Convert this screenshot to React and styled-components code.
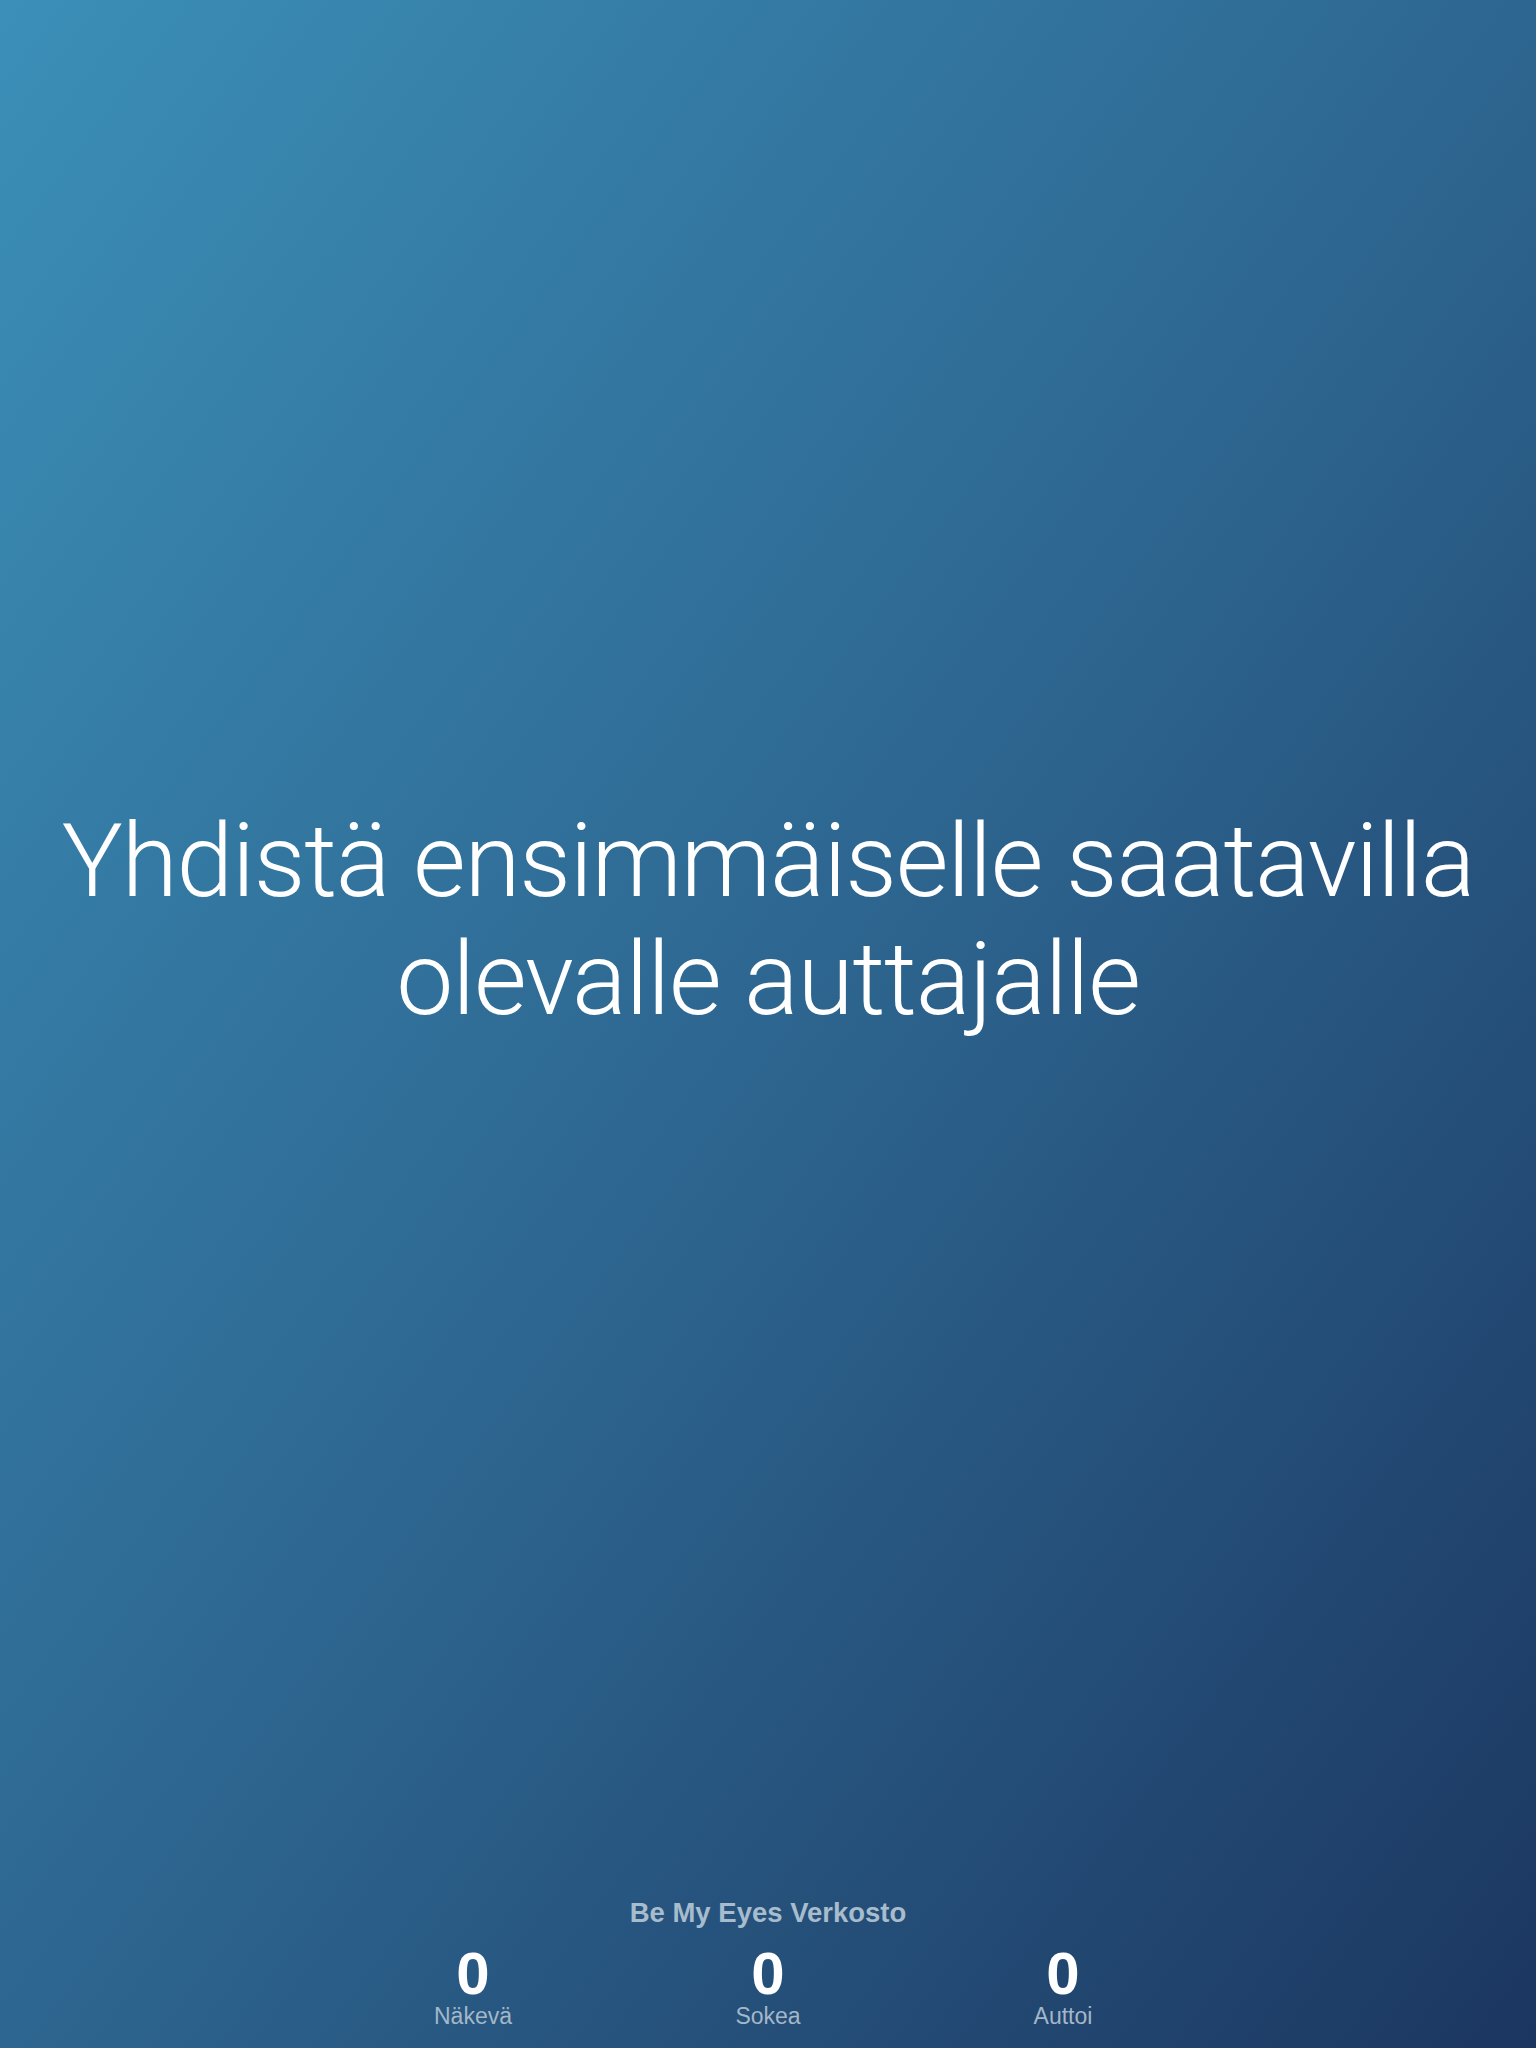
import styled, { createGlobalStyle } from "styled-components";

const GlobalStyle = createGlobalStyle`
    html, body {
        margin: 0;
        padding: 0;
    }
    body {
        font-family: "Roboto", "Liberation Sans", sans-serif;
    }
`;

export default function App() {
    const stats = [
        { value: 0, label: "Näkevä" },
        { value: 0, label: "Sokea" },
        { value: 0, label: "Auttoi" },
    ];

    return (
        <>
            <GlobalStyle />
            <Screen>
                <Main>
                    <Headline>
                        Yhdistä ensimmäiselle saatavilla
                        <br />
                        olevalle auttajalle
                    </Headline>
                </Main>
                <Footer>
                    <NetworkTitle>Be My Eyes Verkosto</NetworkTitle>
                    <Stats>
                        {stats.map((s) => (
                            <Stat key={s.label}>
                                <StatValue>{s.value}</StatValue>
                                <StatLabel>{s.label}</StatLabel>
                            </Stat>
                        ))}
                    </Stats>
                </Footer>
            </Screen>
        </>
    );
}

const Screen = styled.div`
    width: 1536px;
    height: 2048px;
    display: flex;
    flex-direction: column;
    background: linear-gradient(to bottom right, #3b8fb8 0%, #2d6690 50%, #1b3660 100%);
    color: #ffffff;
    overflow: hidden;
`;

const Main = styled.main`
    flex: 1;
    display: flex;
    align-items: center;
    justify-content: center;
    padding-bottom: 58px;
`;

const Headline = styled.h1`
    margin: 0;
    font-family: "Roboto", "Liberation Sans", sans-serif;
    font-weight: 300;
    font-size: 102px;
    line-height: 118px;
    text-align: center;
    letter-spacing: -1.2px;
`;

const Footer = styled.footer`
    display: flex;
    flex-direction: column;
    align-items: center;
    padding-bottom: 18px;
`;

const NetworkTitle = styled.div`
    font-family: "Liberation Sans", sans-serif;
    font-weight: 700;
    font-size: 27.5px;
    color: #a7bccd;
    margin-bottom: 17px;
`;

const Stats = styled.div`
    display: grid;
    grid-template-columns: repeat(3, 295px);
`;

const Stat = styled.div`
    display: flex;
    flex-direction: column;
    align-items: center;
`;

const StatValue = styled.div`
    font-family: "Liberation Sans", sans-serif;
    font-weight: 700;
    font-size: 60px;
    line-height: 56px;
`;

const StatLabel = styled.div`
    font-family: "Liberation Sans", sans-serif;
    font-size: 23px;
    color: #a3b7c8;
    line-height: 28px;
`;
